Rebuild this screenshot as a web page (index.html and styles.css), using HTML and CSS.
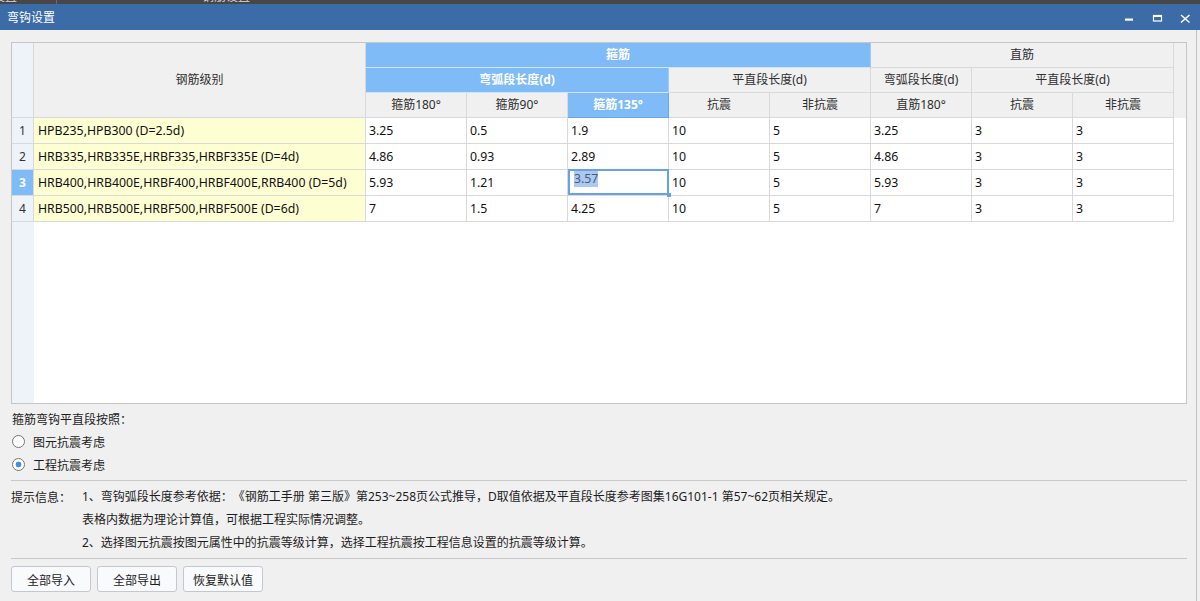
FILE: index.html
```html
<!DOCTYPE html>
<html lang="zh-CN">
<head>
<meta charset="utf-8">
<title>弯钩设置</title>
<link rel="stylesheet" href="styles.css">
</head>
<body>
<div class="window">
  <div class="topstrip">
    <div class="strip-row">
      <span class="st st1">设置</span>
      <span class="st-div"></span>
      <span class="st st2">钢筋设置</span>
    </div>
  </div>
  <div class="titlebar">
    <span class="title">弯钩设置</span>
    <div class="winbtns">
      <svg class="wb" width="28" height="26" viewBox="0 0 28 26"><rect x="10" y="14.5" width="8" height="2.2" fill="#fff"/></svg>
      <svg class="wb" width="28" height="26" viewBox="0 0 28 26"><rect x="10.5" y="11.5" width="8" height="5.5" fill="none" stroke="#fff" stroke-width="1.2"/><rect x="10" y="11" width="9" height="2" fill="#fff"/></svg>
      <svg class="wb" width="28" height="26" viewBox="0 0 28 26"><path d="M10 11 L18.5 18.5 M18.5 11 L10 18.5" stroke="#fff" stroke-width="1.5" fill="none"/></svg>
    </div>
  </div>
  <div class="content">
    <div class="gridbox">
      <div class="grid">
        <div class="c rn rn-head"></div>
        <div class="c h name-head">钢筋级别</div>
        <div class="c h hb g-hoop">箍筋</div>
        <div class="c h g-straight">直筋</div>
        <div class="filler-head"></div>

        <div class="c h hb hoop-arc">弯弧段长度(d)</div>
        <div class="c h hoop-flat">平直段长度(d)</div>
        <div class="c h">弯弧段长度(d)</div>
        <div class="c h str-flat">平直段长度(d)</div>

        <div class="c h">箍筋180°</div>
        <div class="c h">箍筋90°</div>
        <div class="c h hb hb-sel">箍筋135°</div>
        <div class="c h">抗震</div>
        <div class="c h">非抗震</div>
        <div class="c h">直筋180°</div>
        <div class="c h">抗震</div>
        <div class="c h">非抗震</div>

        <div class="c rn">1</div>
        <div class="c y">HPB235,HPB300 (D=2.5d)</div>
        <div class="c d">3.25</div><div class="c d">0.5</div><div class="c d">1.9</div><div class="c d">10</div><div class="c d">5</div><div class="c d">3.25</div><div class="c d">3</div><div class="c d">3</div>

        <div class="c rn">2</div>
        <div class="c y">HRB335,HRB335E,HRBF335,HRBF335E (D=4d)</div>
        <div class="c d">4.86</div><div class="c d">0.93</div><div class="c d">2.89</div><div class="c d">10</div><div class="c d">5</div><div class="c d">4.86</div><div class="c d">3</div><div class="c d">3</div>

        <div class="c rn rn-sel">3</div>
        <div class="c y">HRB400,HRB400E,HRBF400,HRBF400E,RRB400 (D=5d)</div>
        <div class="c d">5.93</div><div class="c d">1.21</div><div class="c d sel"><span class="hl">3.57</span></div><div class="c d">10</div><div class="c d">5</div><div class="c d">5.93</div><div class="c d">3</div><div class="c d">3</div>

        <div class="c rn">4</div>
        <div class="c y">HRB500,HRB500E,HRBF500,HRBF500E (D=6d)</div>
        <div class="c d">7</div><div class="c d">1.5</div><div class="c d">4.25</div><div class="c d">10</div><div class="c d">5</div><div class="c d">7</div><div class="c d">3</div><div class="c d">3</div>

        <div class="rn-fill"></div>
      </div>
    </div>

    <div class="options">
      <div class="opt-label">箍筋弯钩平直段按照：</div>
      <div class="radio"><span class="rb"></span><span>图元抗震考虑</span></div>
      <div class="radio"><span class="rb on"></span><span>工程抗震考虑</span></div>
    </div>

    <div class="sep"></div>

    <div class="hint">
      <div class="hint-label">提示信息：</div>
      <div class="hint-lines">
        <div>1、弯钩弧段长度参考依据：《钢筋工手册 第三版》第253~258页公式推导，D取值依据及平直段长度参考图集16G101-1 第57~62页相关规定。</div>
        <div>表格内数据为理论计算值，可根据工程实际情况调整。</div>
        <div>2、选择图元抗震按图元属性中的抗震等级计算，选择工程抗震按工程信息设置的抗震等级计算。</div>
      </div>
    </div>

    <div class="sep sep2"></div>

    <div class="buttons">
      <button class="btn">全部导入</button>
      <button class="btn">全部导出</button>
      <button class="btn">恢复默认值</button>
    </div>
  </div>
</div>
</body>
</html>
```
FILE: styles.css
```css
* { box-sizing: border-box; }
html, body { margin: 0; padding: 0; }
body {
  width: 1200px;
  height: 601px;
  overflow: hidden;
  background: #f0f0f0;
  font-family: "Noto Sans", "Noto Sans CJK SC", sans-serif;
  font-size: 12px;
  color: #1c1c1c;
  text-spacing-trim: space-all;
}
.window { display: flex; flex-direction: column; height: 601px; }

.topstrip { height: 4px; overflow: hidden; background: #474747; }
.strip-row {
  display: flex;
  align-items: center;
  height: 16px;
  margin-top: -12px;
  color: #d8d8d8;
  line-height: 16px;
  font-family: "Noto Sans CJK SC", sans-serif;
}
.st1 { margin-left: -7px; width: 63px; }
.st-div { width: 1px; height: 16px; background: #6a6a6a; }
.st2 { margin-left: 145px; }

.titlebar {
  height: 26px;
  background: #3b6ca7;
  display: flex;
  align-items: center;
  justify-content: space-between;
  color: #fff;
}
.title {
  padding-left: 7px;
  line-height: 26px;
  font-family: "Noto Sans CJK SC", sans-serif;
  font-size: 12px;
}
.winbtns { display: flex; padding-right: 1px; }
.wb { display: block; }

.content {
  flex: 1;
  width: 1197px;
  border-right: 1px solid #c2c2c2;
  padding: 12px 0 0 11px;
  display: flex;
  flex-direction: column;
}

.gridbox {
  width: 1176px;
  height: 362px;
  border: 1px solid #c6c6c6;
  background: #fff;
}
.grid {
  display: grid;
  grid-template-columns: 22px 332px repeat(8, 101px) 1fr;
  grid-template-rows: 25px 25px 25px repeat(4, 26px) 1fr;
  height: 100%;
}
.c {
  display: flex;
  align-items: center;
  padding: 0 3px;
  border-right: 1px solid #d9d9d9;
  border-bottom: 1px solid #d9d9d9;
  white-space: nowrap;
  overflow: hidden;
  line-height: 16px;
}
.h { background: #f0f0f0; justify-content: center; color: #2e2e2e; }
.hb {
  background: #7fbbf7;
  color: #fff;
  font-weight: bold;
  border-right-color: #9fcbf9;
  border-bottom-color: #cfe4fb;
}
.hb-sel { border-bottom-color: #6aa8ee; border-right-color: #6aa8ee; }
.rn {
  grid-column: 1;
  background: #eef2f9;
  justify-content: center;
  padding: 0;
  color: #333;
}
.rn-sel { background: #7fbbf7; color: #fff; font-weight: bold; }
.rn-head { grid-row: 1 / 4; }
.name-head { grid-row: 1 / 4; }
.g-hoop { grid-column: 3 / 8; }
.g-straight { grid-column: 8 / 11; }
.filler-head { grid-column: 11; grid-row: 1 / 4; background: #f0f0f0; }
.hoop-arc { grid-column: 3 / 6; }
.hoop-flat { grid-column: 6 / 8; }
.str-flat { grid-column: 9 / 11; }

.y { background: #fefed3; padding-left: 4px; font-size: 12.3px; color: #111; }
.d { background: #fff; font-size: 12.3px; color: #111; }

.sel {
  position: relative;
  overflow: visible;
  z-index: 2;
  align-items: flex-start;
  padding-top: 1px;
  padding-left: 6px;
}
.sel::after {
  content: "";
  position: absolute;
  left: 0;
  top: -1px;
  right: -1px;
  bottom: 0;
  border: 2px solid #68a2e6;
}
.sel::before {
  content: "";
  position: absolute;
  right: -3px;
  bottom: -2px;
  width: 4px;
  height: 4px;
  background: #68a2e6;
}
.hl { background: #a9c8f2; color: #4d5b6f; line-height: 16px; }

.rn-fill { grid-column: 1; background: #eef2f9; }

.options { margin-top: 3px; display: flex; flex-direction: column; }
.opt-label, .radio {
  height: 23px;
  line-height: 23px;
  font-family: "Noto Sans CJK SC", sans-serif;
}
.opt-label { padding-left: 1px; }
.radio { display: flex; align-items: center; gap: 8px; }
.rb {
  width: 13px;
  height: 13px;
  margin-left: 1px;
  border: 1px solid #777;
  border-radius: 50%;
  background: #fff;
}
.rb.on { background: radial-gradient(circle, #3a8de8 0 2.6px, #fff 3.2px); }

.sep { width: 1176px; height: 1px; background: #c8c8c8; margin-top: 4px; }

.hint { display: flex; margin-top: 4px; font-family: "Noto Sans", "Noto Sans CJK SC", sans-serif; }
.hint-label { width: 71px; line-height: 23px; font-family: "Noto Sans CJK SC", sans-serif; }
.hint-lines { display: flex; flex-direction: column; }
.hint-lines div { height: 23px; line-height: 23px; white-space: nowrap; }

.buttons { display: flex; gap: 6px; margin-top: 7px; }
.btn {
  width: 80px;
  height: 26px;
  border: 1px solid #c3c7cf;
  border-radius: 3px;
  background: #f9fafc;
  font-family: "Noto Sans CJK SC", sans-serif;
  font-size: 12px;
  color: #1c1c1c;
  padding: 0;
  display: flex;
  align-items: center;
  justify-content: center;
}
```
